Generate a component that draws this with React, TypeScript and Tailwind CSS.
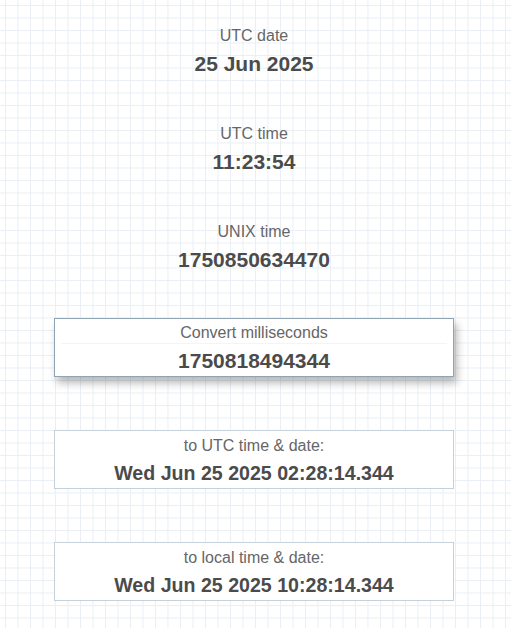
const gridBg =
  "bg-[linear-gradient(to_right,#e9eff5_1px,transparent_1px),linear-gradient(to_bottom,#e9eff5_1px,transparent_1px)] bg-[size:12.5px_12.5px] bg-[position:5px_5px]";

function Stat({ label, value }: { label: string; value: string }) {
  return (
    <div className="flex flex-col items-center">
      <div className="text-base leading-5 text-[#666]">{label}</div>
      <div className="mt-[4px] text-[21px] leading-[28px] font-bold text-[#4b4b4b]">{value}</div>
    </div>
  );
}

function ResultBox({ label, value }: { label: string; value: string }) {
  return (
    <div className="w-[400px] border border-[#c5d1db] bg-white pt-[5px] pb-px text-center">
      <div className="text-base leading-5 text-[#666]">{label}</div>
      <div className="mt-[3px] text-[19.6px] leading-[28px] font-bold text-[#4b4b4b]">{value}</div>
    </div>
  );
}

export default function App() {
  return (
    <div className={`min-h-screen bg-white ${gridBg} font-['Liberation_Sans',Arial,sans-serif]`}>
      <div className="ml-[54px] w-[400px] pt-[26px] flex flex-col">
        <div className="flex flex-col gap-[46px]">
          <Stat label="UTC date" value="25 Jun 2025" />
          <Stat label="UTC time" value="11:23:54" />
          <Stat label="UNIX time" value="1750850634470" />
        </div>

        <div className="mt-[44px] w-[400px] border border-[#8fa3b2] bg-white pt-[4px] pb-px text-center shadow-[3px_6px_8px_rgba(0,0,0,0.28)]">
          <div className="text-base leading-5 text-[#666]">Convert milliseconds</div>
          <div className="mx-[6px] border-t border-[#f2f4f5] pt-[3px] text-[21px] leading-[28px] font-bold text-[#4b4b4b]">
            1750818494344
          </div>
        </div>

        <div className="mt-[53px] flex flex-col gap-[53px]">
          <ResultBox label="to UTC time & date:" value="Wed Jun 25 2025 02:28:14.344" />
          <ResultBox label="to local time & date:" value="Wed Jun 25 2025 10:28:14.344" />
        </div>
      </div>
    </div>
  );
}
